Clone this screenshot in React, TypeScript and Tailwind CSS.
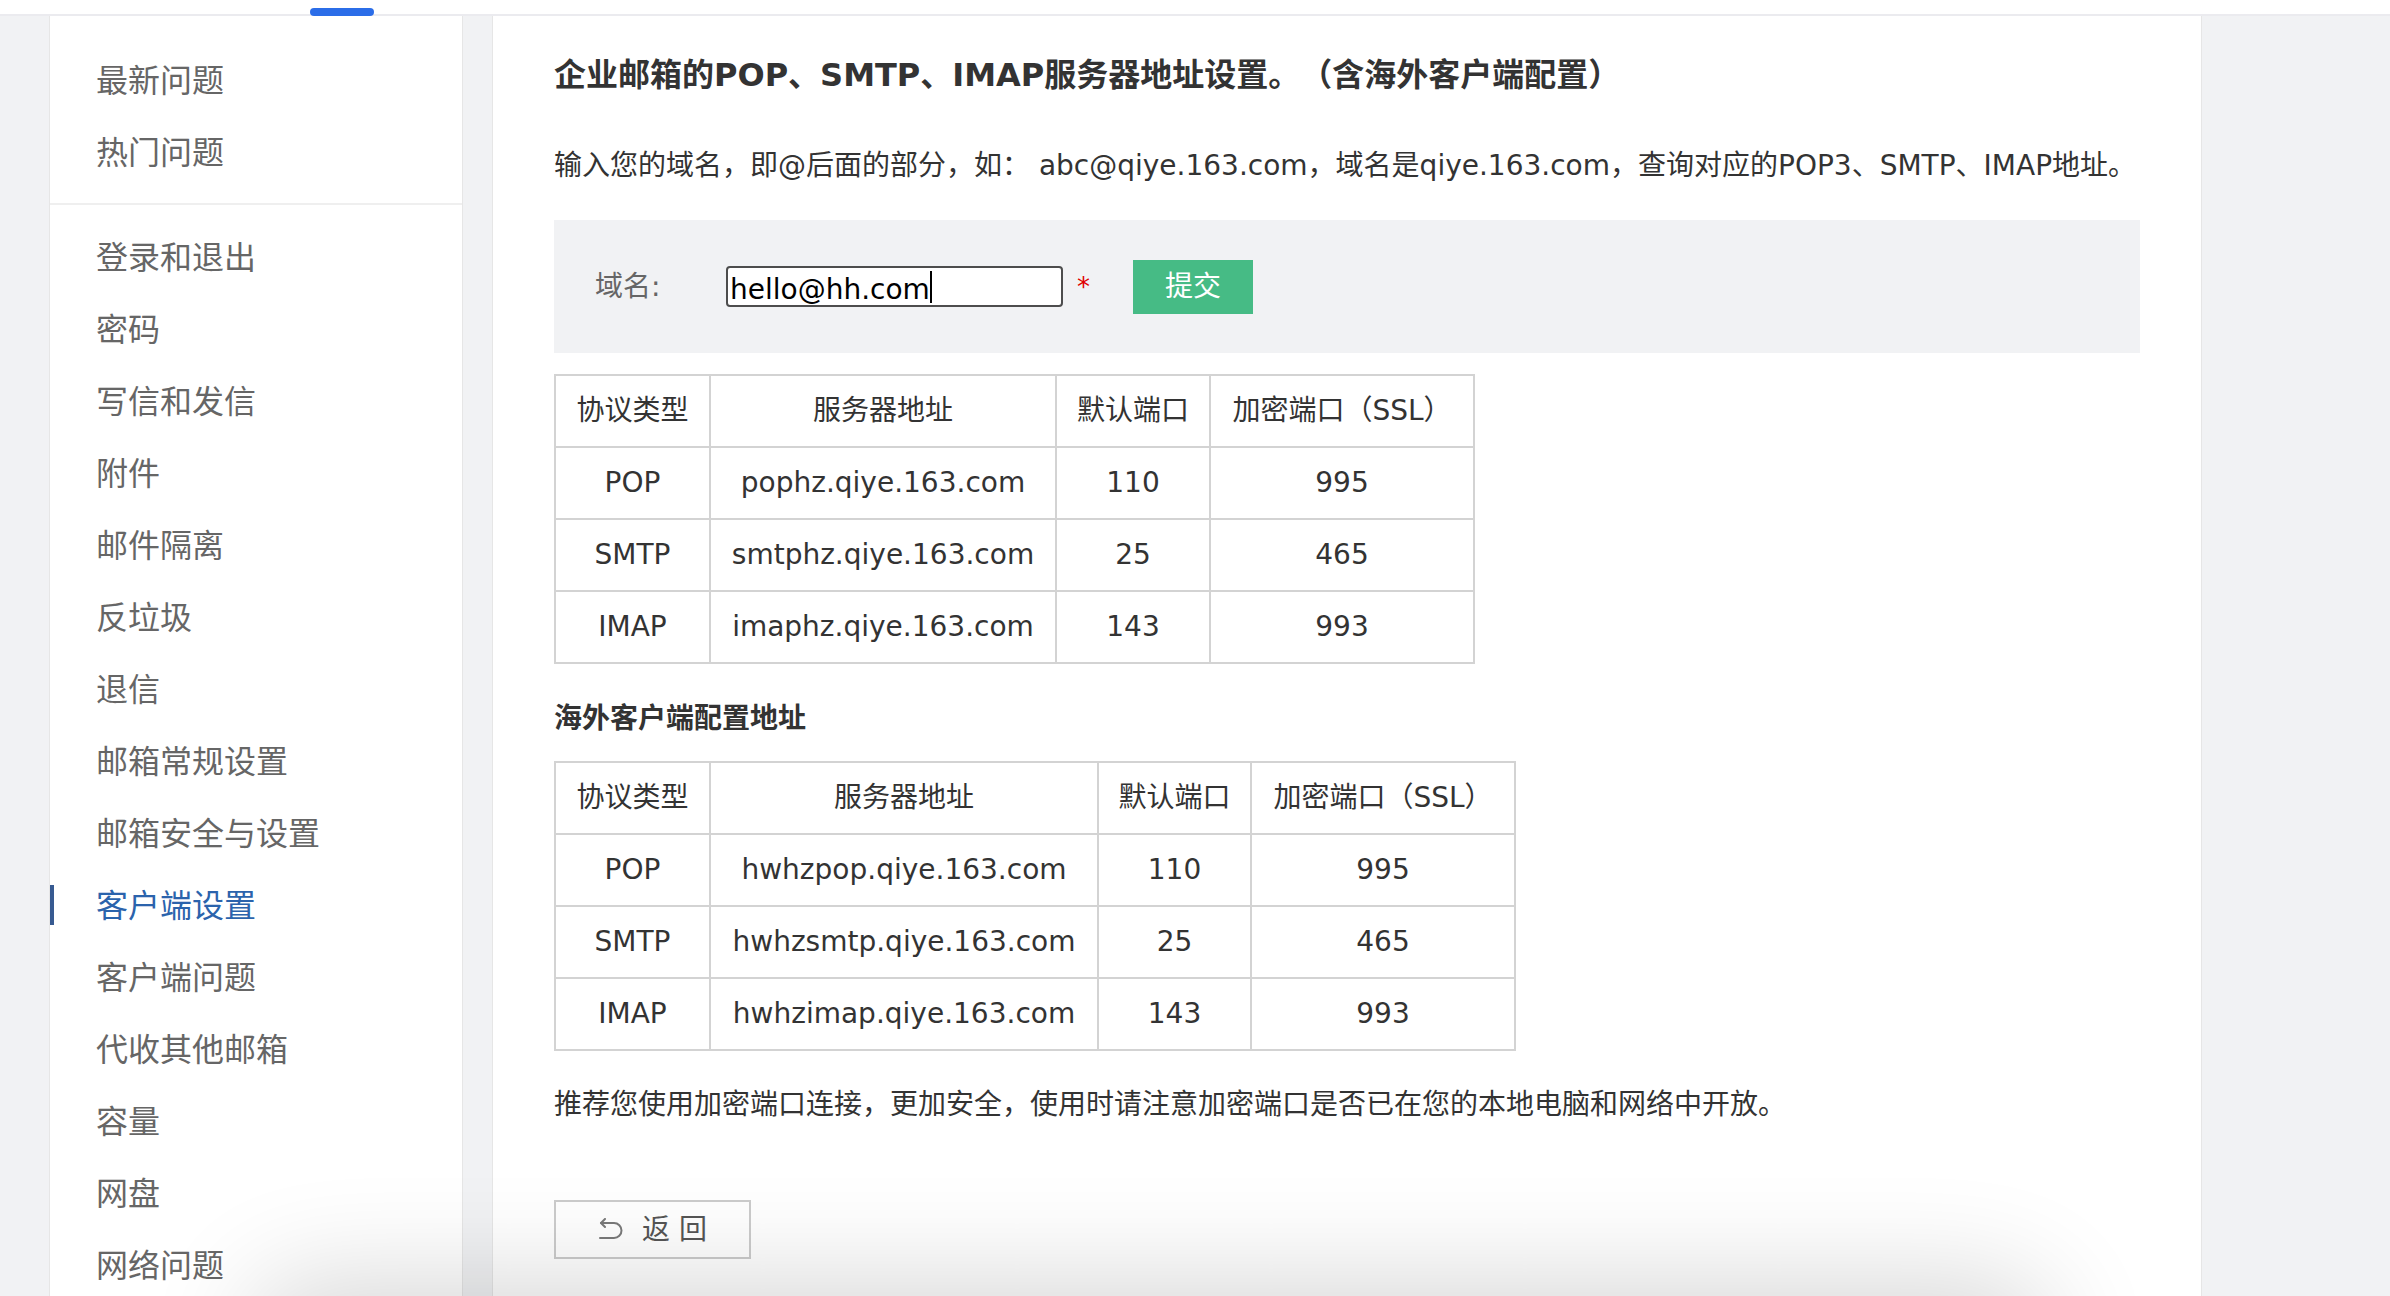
import React from "react";

const topItems = ["最新问题", "热门问题"];
const items = [
  "登录和退出",
  "密码",
  "写信和发信",
  "附件",
  "邮件隔离",
  "反垃圾",
  "退信",
  "邮箱常规设置",
  "邮箱安全与设置",
  "客户端设置",
  "客户端问题",
  "代收其他邮箱",
  "容量",
  "网盘",
  "网络问题",
];

const domestic = [
  ["POP", "pophz.qiye.163.com", "110", "995"],
  ["SMTP", "smtphz.qiye.163.com", "25", "465"],
  ["IMAP", "imaphz.qiye.163.com", "143", "993"],
];
const overseas = [
  ["POP", "hwhzpop.qiye.163.com", "110", "995"],
  ["SMTP", "hwhzsmtp.qiye.163.com", "25", "465"],
  ["IMAP", "hwhzimap.qiye.163.com", "143", "993"],
];

const head = ["协议类型", "服务器地址", "默认端口", "加密端口（SSL）"];

const SideItem = ({ label, active }: { label: string; active?: boolean }) => (
  <div className="relative flex h-[72px] items-center pl-[46px]">
    {active && <span className="absolute left-0 top-[18px] h-[40px] w-[4px] bg-[#375a91]" />}
    <span className={active ? "text-[#2b63ac]" : ""}>{label}</span>
  </div>
);

const ServerTable = ({ rows, cols, width }: { rows: string[][]; cols: string[]; width: string }) => (
  <table className={"table-fixed border-collapse text-[28px] text-[#333] " + width}>
    <colgroup>
      {cols.map((c, i) => (
        <col key={i} className={c} />
      ))}
    </colgroup>
    <thead>
      <tr>
        {head.map((h) => (
          <th key={h} className="h-[72px] border-2 border-[#d3d3d3] p-0 text-center font-normal">
            {h}
          </th>
        ))}
      </tr>
    </thead>
    <tbody>
      {rows.map((r) => (
        <tr key={r[1]}>
          {r.map((c, i) => (
            <td key={i} className="h-[72px] border-2 border-[#d3d3d3] p-0 text-center">
              {c}
            </td>
          ))}
        </tr>
      ))}
    </tbody>
  </table>
);

const BackIcon = () => (
  <svg width="27" height="23" viewBox="0 0 27 23" fill="none" stroke="#7a7a7a" strokeWidth="2" strokeLinecap="round" strokeLinejoin="round">
    <path d="M7 1 L3 5 L7 9" />
    <path d="M3 5 H16 A7.5 7.5 0 0 1 16 20 H2" />
  </svg>
);

export default function App() {
  return (
    <div className="relative h-[1296px] w-[2390px] overflow-hidden bg-[#f1f2f4] font-['DejaVu_Sans','Noto_Sans_CJK_SC',sans-serif] [text-spacing-trim:space-all]">
      {/* top strip */}
      <div className="relative h-[16px] border-b-2 border-[#ebebef] bg-white">
        <div className="absolute left-[310px] top-[8px] h-[8px] w-[64px] rounded-full bg-[#2b6de8]" />
      </div>

      <div className="flex h-[1280px]">
        <aside className="ml-[49px] w-[414px] shrink-0 border-x border-[#e6e6e6] bg-white pt-[26px] font-['Noto_Sans_CJK_SC',sans-serif] text-[32px] text-[#666]">
          <div className="border-b-2 border-[#efefef] pb-[17px]">
            {topItems.map((t) => (
              <SideItem key={t} label={t} />
            ))}
          </div>
          <div className="pt-[14px]">
            {items.map((t) => (
              <SideItem key={t} label={t} active={t === "客户端设置"} />
            ))}
          </div>
        </aside>

        <main className="ml-[29px] w-[1710px] shrink-0 border-x border-[#e6e6e6] bg-white px-[61px] pt-[35px] text-[#333]">
          <h1 className="text-[32px] font-bold leading-[48px] text-[#333]">
            企业邮箱的POP、SMTP、IMAP服务器地址设置。（含海外客户端配置）
          </h1>
          <p className="mt-[46px] text-[28px] leading-[42px]">
            输入您的域名，即@后面的部分，如： abc@qiye.163.com，域名是qiye.163.com，查询对应的POP3、SMTP、IMAP地址。
          </p>

          <div className="mt-[33px] flex h-[133px] items-center bg-[#f1f2f4] pl-[41px]">
            <span className="w-[131px] text-[28px] text-[#666]">域名:</span>
            <div className="flex h-[41px] w-[337px] items-center rounded-[4px] border-2 border-[#4d4d4d] bg-white pl-[2px] text-[28px] text-black">
              <span className="translate-y-[3px]">hello@hh.com</span>
              <span className="h-[32px] w-[2px] bg-black" />
            </div>
            <span className="ml-[14px] text-[26px] leading-none text-[#e00000]">*</span>
            <button className="ml-[43px] h-[54px] w-[120px] bg-[#46bb85] text-[28px] text-white">提交</button>
          </div>

          <div className="mt-[21px]">
            <ServerTable rows={domestic} width="w-[919px]" cols={["w-[155px]", "w-[346px]", "w-[154px]", "w-[264px]"]} />
          </div>

          <h2 className="mt-[34px] text-[28px] font-bold leading-[42px]">海外客户端配置地址</h2>

          <div className="mt-[21px]">
            <ServerTable rows={overseas} width="w-[960px]" cols={["w-[155px]", "w-[388px]", "w-[153px]", "w-[264px]"]} />
          </div>

          <p className="mt-[33px] text-[28px] leading-[42px]">
            推荐您使用加密端口连接，更加安全，使用时请注意加密端口是否已在您的本地电脑和网络中开放。
          </p>

          <button className="mt-[74px] flex h-[59px] w-[197px] items-center justify-center gap-[17px] border-2 border-[#cccccc] bg-white text-[28px] text-[#555]">
            <BackIcon />
            <span>返 回</span>
          </button>
        </main>
      </div>

      {/* soft shadow at the bottom edge */}
      <div className="pointer-events-none absolute left-[300px] top-[1330px] h-[40px] w-[1700px] rounded-full shadow-[0_0_110px_50px_rgba(0,0,0,0.16)]" />
    </div>
  );
}
